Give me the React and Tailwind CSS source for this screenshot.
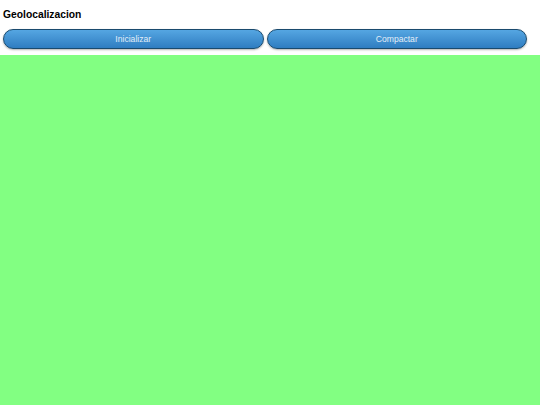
export default function App() {
  return (
    <div className="w-[540px] h-[405px] flex flex-col bg-white" style={{ fontFamily: '"Liberation Sans", Arial, sans-serif' }}>
      <div className="px-[3px] pt-[8px] text-[10.3px] font-bold leading-[13px] text-black">Geolocalizacion</div>
      <div className="flex gap-[3px] pl-[3px] pr-[13px] mt-[8px]">
        <button className="flex-1 h-[20px] rounded-full border border-[#1a4a6e] bg-gradient-to-b from-[#55a6e2] to-[#2f7dc1] text-[8.6px] text-[#e3eef8] shadow-[0_1px_2px_rgba(0,0,0,0.3)]">Inicializar</button>
        <button className="flex-1 h-[20px] rounded-full border border-[#1a4a6e] bg-gradient-to-b from-[#55a6e2] to-[#2f7dc1] text-[8.6px] text-[#e3eef8] shadow-[0_1px_2px_rgba(0,0,0,0.3)]">Compactar</button>
      </div>
      <div className="mt-[6px] flex-1 bg-[#82ff82]"></div>
    </div>
  );
}
